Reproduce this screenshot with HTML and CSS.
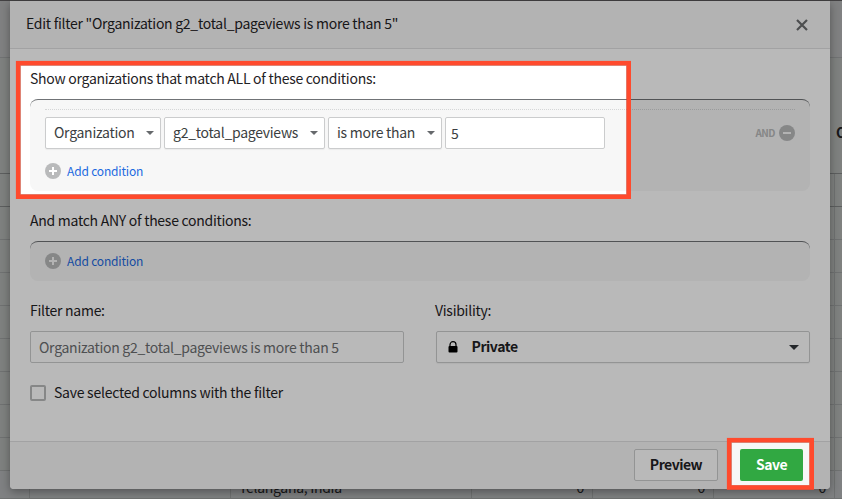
FILE: index.html
```html
<!DOCTYPE html>
<html lang="en">
<head>
<meta charset="utf-8">
<title>Edit filter</title>
<link rel="stylesheet" href="styles.css">
</head>
<body>
<div class="screen">
  <div class="sheet">
    <div class="toolbar"></div>
    <div class="row head"><span></span><span></span><span></span><span></span><span></span><span></span><span class="org">O</span></div>
    <div class="row first"><span></span><span></span><span></span><span></span><span></span><span></span><span></span></div>
    <div class="row"><span></span><span></span><span></span><span></span><span></span><span></span><span></span></div>
    <div class="row"><span></span><span></span><span></span><span></span><span></span><span></span><span></span></div>
    <div class="row"><span></span><span></span><span></span><span></span><span></span><span></span><span></span></div>
    <div class="row"><span></span><span></span><span></span><span></span><span></span><span></span><span></span></div>
    <div class="row"><span></span><span></span><span></span><span></span><span></span><span></span><span></span></div>
    <div class="row"><span></span><span></span><span></span><span></span><span></span><span></span><span></span></div>
    <div class="row"><span></span><span></span><span></span><span></span><span></span><span></span><span></span></div>
    <div class="row"><span></span><span></span><span></span><span></span><span></span><span></span><span></span></div>
    <div class="row last"><span></span><span></span><span class="place">Telangana, India</span><span class="num">0</span><span class="num">0</span><span class="num">0</span><span></span></div>
  </div>

  <div class="modal">
    <header class="modal-head">
      <h1 class="title">Edit filter "Organization g2_total_pageviews is more than 5"</h1>
      <svg class="close" width="12" height="12" viewBox="0 0 12 12"><path d="M1 1l10 10M11 1L1 11" fill="none" stroke="#6a6c6e" stroke-width="2.2"/></svg>
    </header>
    <main class="modal-body">
      <p class="label">Show organizations that match ALL of these conditions:</p>
      <section class="box box-all">
        <div class="condition">
          <div class="select w-org"><span>Organization</span><i class="caret"></i></div>
          <div class="select w-field"><span>g2_total_pageviews</span><i class="caret"></i></div>
          <div class="select w-op"><span>is more than</span><i class="caret"></i></div>
          <div class="value">5</div>
          <div class="and">AND
            <svg width="16" height="16" viewBox="0 0 16 16"><circle cx="8" cy="8" r="8" fill="#b9babb"/><path d="M4 8h8" stroke="#f7f7f7" stroke-width="2"/></svg>
          </div>
        </div>
        <div class="add">
          <svg width="16" height="16" viewBox="0 0 16 16"><circle cx="8" cy="8" r="8" fill="#b9babb"/><path d="M4 8h8M8 4v8" stroke="#fff" stroke-width="2"/></svg>
          <span>Add condition</span>
        </div>
      </section>
      <p class="label label-any">And match ANY of these conditions:</p>
      <section class="box box-any">
        <div class="add">
          <svg width="16" height="16" viewBox="0 0 16 16"><circle cx="8" cy="8" r="8" fill="#b9babb"/><path d="M4 8h8M8 4v8" stroke="#f7f7f7" stroke-width="2"/></svg>
          <span>Add condition</span>
        </div>
      </section>
      <div class="fields">
        <div class="field">
          <p class="label">Filter name:</p>
          <div class="name-input">Organization g2_total_pageviews is more than 5</div>
        </div>
        <div class="field">
          <p class="label">Visibility:</p>
          <div class="visibility">
            <svg width="10" height="12" viewBox="0 0 10 12"><path d="M2 6V3.7a3 3 0 0 1 6 0V6" fill="none" stroke="#000" stroke-width="1.2"/><rect x=".5" y="4.9" width="9" height="6.6" rx="1" fill="#000"/></svg>
            <b>Private</b>
            <i class="caret caret-dark"></i>
          </div>
        </div>
      </div>
      <div class="check"><i class="checkbox"></i><span>Save selected columns with the filter</span></div>
    </main>
    <footer class="modal-foot">
      <div class="btn btn-preview">Preview</div>
      <div class="btn btn-save">Save</div>
    </footer>
  </div>

  <svg class="spotlight" width="842" height="499" viewBox="0 0 842 499">
    <path fill="#000" fill-opacity=".275" fill-rule="evenodd" d="M0 0H842V499H0ZM18 63V197H629V63ZM729 440V488H812V440Z"/>
    <g fill="none" stroke="#000" stroke-opacity=".25"><rect x="20.5" y="65.5" width="606" height="129"/><rect x="731.5" y="442.5" width="78" height="43"/></g>
    <g fill="none" stroke="#ff4a2d" stroke-width="4.6"><rect x="18.2" y="63.2" width="610.5" height="133.5"/><rect x="729.2" y="440.2" width="82.5" height="47.3"/></g>
  </svg>
</div>
</body>
</html>
```
FILE: styles.css
```css
* { box-sizing: border-box; }
body { margin: 0; }
.screen {
  position: relative;
  width: 842px;
  height: 499px;
  overflow: hidden;
  background: #afb2b0;
  font: 14px/20px "Noto Sans CJK SC", "Open Sans", sans-serif;
  letter-spacing: -.27px;
  color: #1f2225;
}
p, h1 { margin: 0; }

.sheet { width: 842px; }
.toolbar { height: 58px; border-top: 1px solid #5c5a5c; border-bottom: 1px solid #9d9fa0; background: #b1b2b3; }
.row {
  display: grid;
  grid-template-columns: 30px 201px 241px 121px 121px 121px 7px;
  height: 33px;
  border-bottom: 1px solid #9a9d9d;
}
.row span { border-right: 1px solid #9a9d9d; white-space: nowrap; }
.row span:last-child { border: 0; }
.head { height: 116px; border-color: #808383; }
.head span { border-color: transparent; }
.head .org { padding: 64px 0 0 1px; font-weight: 700; overflow: hidden; }
.first { border-color: #808383; }
.last { height: 28px; background: #b0b2b4; }
.last span { padding-top: 6px; line-height: 20px; }
.last .place { padding-left: 8px; letter-spacing: -.3px; }
.last .num { padding-right: 8px; text-align: right; }

.modal {
  position: absolute;
  left: 10px;
  top: 1px;
  display: flex;
  flex-direction: column;
  width: 820px;
  height: 488px;
  overflow: hidden;
  border-radius: 0 0 4px 4px;
  background: #fff;
  box-shadow: 0 3px 10px rgba(0, 0, 0, .35);
}
.modal-head {
  display: flex;
  align-items: center;
  justify-content: space-between;
  height: 48px;
  padding: 0 22px 4px 16px;
  border-bottom: 1px solid #e0e0e1;
  background: #f7f7f7;
}
.title { font-size: 14px; font-weight: 400; }
.close { margin-top: 4px; }
.modal-body { flex: 1; padding: 19px 20px 0; }
.box {
  margin-top: 11px;
  padding: 0 15px;
  border-top: 1px solid #707376;
  border-radius: 8px;
  background: #f7f7f7;
}
.box-all { height: 92px; padding-top: 9px; }
.box-any { height: 40px; padding-top: 11px; }
.condition { display: flex; gap: 3px; padding-top: 7px; border-top: 1px dotted #d5d6d7; }
.select, .value, .name-input, .visibility {
  display: flex;
  align-items: center;
  height: 32px;
  border: 1px solid #cbcccd;
  border-radius: 2px;
  background: #fff;
}
.select {
  justify-content: space-between;
  padding: 0 6px 0 8px;
  color: #3b3e41;
  box-shadow: 0 1px 1px rgba(0, 0, 0, .05);
}
.select span { padding-bottom: 2px; }
.w-org { width: 116px; }
.w-field { width: 161px; }
.w-op { width: 114px; }
.value { width: 160px; padding: 0 5px; color: #3b3e41; }
.caret { border: 4px solid transparent; border-top-color: #66696c; border-bottom: 0; }
.and {
  display: flex;
  align-items: center;
  gap: 4px;
  margin-left: auto;
  color: #b9babb;
  font-size: 10px;
  font-weight: 700;
  letter-spacing: -.5px;
}
.add { display: flex; align-items: center; gap: 6px; height: 16px; color: #1d6ae0; font-size: 12px; letter-spacing: -.17px; }
.box-all .add { margin-top: 14px; }
.label-any { margin-top: 19px; }
.fields { display: grid; grid-template-columns: 374px 375px; gap: 31px; margin-top: 19px; }
.name-input { margin-top: 11px; padding: 0 8px; color: #6c6e70; }
.visibility { margin: 11px 0 0 .5px; padding: 0 10px 0 11px; box-shadow: 0 1px 1px rgba(0, 0, 0, .05); }
.visibility b { margin-left: 14px; padding-bottom: 2px; letter-spacing: -.45px; }
.caret-dark { margin-left: auto; border-width: 5px 5px 0; border-top-color: #32363a; }
.check { display: flex; align-items: center; gap: 8px; margin-top: 20px; }
.check span { margin-top: -1px; letter-spacing: -.25px; }
.checkbox { width: 16px; height: 16px; border: 2px solid #b9babb; border-radius: 2px; }
.modal-foot {
  display: flex;
  justify-content: flex-end;
  gap: 22px;
  height: 48px;
  padding: 7px 27px 0;
  border-top: 1px solid #e0e0e1;
  background: #f7f7f7;
}
.btn { height: 32px; border-radius: 2px; line-height: 28px; text-align: center; font-weight: 700; letter-spacing: -.5px; }
.btn-preview { width: 84px; border: 1px solid #cbcccd; background: #fff; }
.btn-save { width: 63px; line-height: 30px; background: #31a842; color: #fff; }

.spotlight { position: absolute; left: 0; top: 0; }
```
